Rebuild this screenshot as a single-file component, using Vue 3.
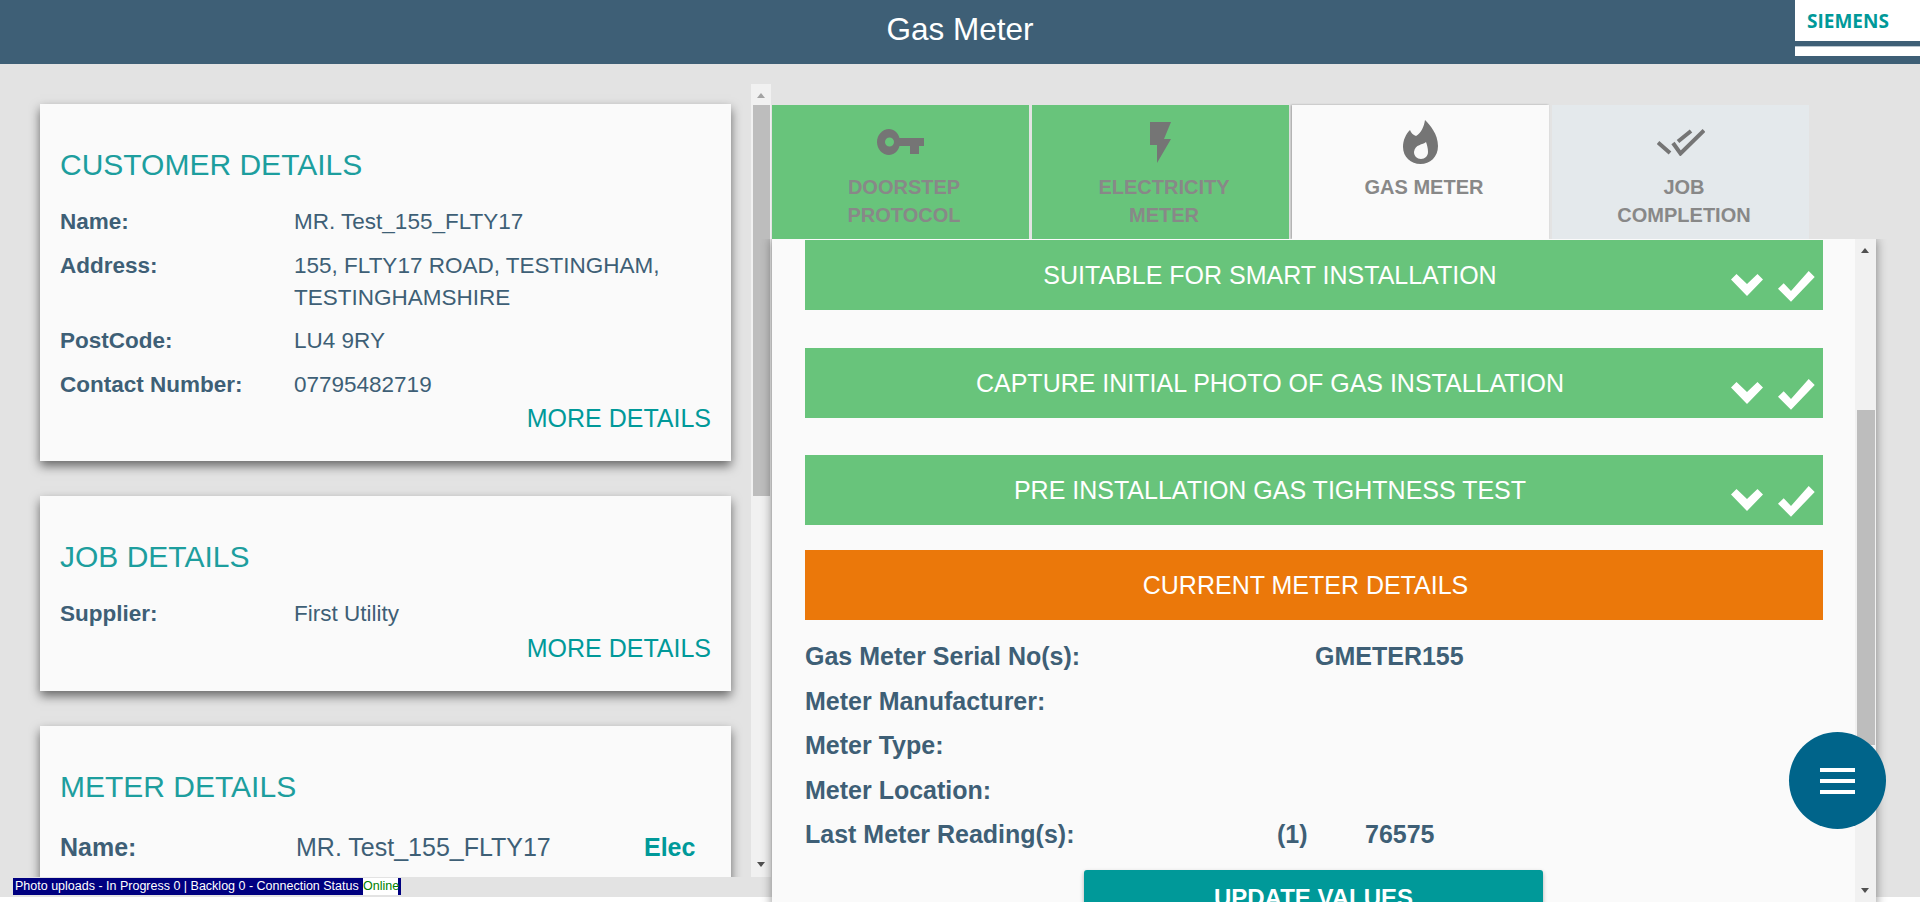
<script setup>
const tabs = [
  { id: 'key', lines: ['DOORSTEP', 'PROTOCOL'], state: 'done' },
  { id: 'bolt', lines: ['ELECTRICITY', 'METER'], state: 'done' },
  { id: 'flame', lines: ['GAS METER'], state: 'active' },
  { id: 'checks', lines: ['JOB', 'COMPLETION'], state: 'todo' }
]

const doneSteps = [
  'SUITABLE FOR SMART INSTALLATION',
  'CAPTURE INITIAL PHOTO OF GAS INSTALLATION',
  'PRE INSTALLATION GAS TIGHTNESS TEST'
]

const customer = [
  { label: 'Name:', value: 'MR. Test_155_FLTY17' },
  { label: 'Address:', value: '155, FLTY17 ROAD, TESTINGHAM, TESTINGHAMSHIRE' },
  { label: 'PostCode:', value: 'LU4 9RY' },
  { label: 'Contact Number:', value: '07795482719' }
]

const meterRows = [
  { label: 'Gas Meter Serial No(s):', value: 'GMETER155' },
  { label: 'Meter Manufacturer:', value: '' },
  { label: 'Meter Type:', value: '' },
  { label: 'Meter Location:', value: '' }
]
</script>

<template>
  <div class="page">
    <header class="topbar">
      <h1>Gas Meter</h1>
      <div class="logo">
        <div class="logo-top">SIEMENS</div>
        <div class="logo-line"></div>
        <div class="logo-bottom"></div>
      </div>
    </header>

    <main class="content">
      <section class="left">
        <div class="left-scroll">
          <div class="card">
            <h2>CUSTOMER DETAILS</h2>
            <div v-for="row in customer" :key="row.label" class="row">
              <b>{{ row.label }}</b>
              <span>{{ row.value }}</span>
            </div>
            <a class="more">MORE DETAILS</a>
          </div>
          <div class="card">
            <h2>JOB DETAILS</h2>
            <div class="row">
              <b>Supplier:</b>
              <span>First Utility</span>
            </div>
            <a class="more">MORE DETAILS</a>
          </div>
          <div class="card">
            <h2>METER DETAILS</h2>
            <div class="row meter-row">
              <b>Name:</b>
              <span>MR. Test_155_FLTY17</span>
              <em>Elec</em>
            </div>
          </div>
        </div>
        <div class="scrollbar left-bar">
          <i class="arrow up"></i>
          <div class="thumb"></div>
          <i class="arrow down"></i>
        </div>
      </section>

      <section class="right">
        <nav class="tabs">
          <div v-for="tab in tabs" :key="tab.id" class="tab" :class="tab.state">
            <div class="tab-icon">
              <svg v-if="tab.id === 'key'" width="47" height="26" viewBox="0 0 47 26">
                <path fill="#757575" fill-rule="evenodd" d="M12 0c5 0 9 3.500 10.500 9H47v8H42v8H33V17H22.500C21 22.500 17 26 12 26 5.500 26 0 20 0 13S5.500 0 12 0zm.5 8.500a4.500 4.500 0 1 0 0 9 4.500 4.500 0 0 0 0-9z" />
              </svg>
              <svg v-else-if="tab.id === 'bolt'" width="21" height="41" viewBox="0 0 21 41">
                <path fill="#757575" d="M0 0H21L14 17H21L7 41V23H0z" />
              </svg>
              <svg v-else-if="tab.id === 'flame'" width="35" height="44" viewBox="0 0 35 44">
                <path fill="#757575" fill-rule="evenodd" d="M22 0C27 5 35 14 35 26 35 37 27 44 17.500 44 8 44 0 37 0 27 0 20 3 14 7 10 8 13 10 15 13 16 18 13 21 7 22 0zM23 22C20 25 12 24 11 32 11 36 14 39 18 39 22 39 25 36 25 32 25 28 24 25 23 22z" />
              </svg>
              <svg v-else width="48" height="28" viewBox="0 0 48 28">
                <path fill="none" stroke="#757575" stroke-width="4" d="M1 14.500L13 25M16 15L23.500 25.500 47 2.500M21 13.500L34 3" />
              </svg>
            </div>
            <div class="tab-text">
              <div v-for="line in tab.lines" :key="line">{{ line }}</div>
            </div>
          </div>
        </nav>

        <div class="panel">
          <div class="panel-body">
            <div v-for="step in doneSteps" :key="step" class="step done">
              {{ step }}
              <div class="ticks">
                <svg class="tick-small" width="32" height="22" viewBox="0 0 32 22">
                  <path fill="#fff" d="M0 5.500L5.500 0 16 10 26.500 0 32 5.500 16 22z" />
                </svg>
                <svg width="37" height="31" viewBox="0 0 37 31">
                  <path fill="#fff" d="M0 17.700L5.700 12.300 13 20 30.700 0 36.700 6 13 30.700z" />
                </svg>
              </div>
            </div>
            <div class="step current">CURRENT METER DETAILS</div>

            <div class="details">
              <div v-for="row in meterRows" :key="row.label" class="detail">
                <span class="d-label">{{ row.label }}</span>
                <span class="d-value">{{ row.value }}</span>
              </div>
              <div class="detail">
                <span class="d-label">Last Meter Reading(s):</span>
                <span class="d-reg">(1)</span>
                <span class="d-read">76575</span>
              </div>
            </div>

            <button class="update">UPDATE VALUES</button>
          </div>
          <div class="scrollbar panel-bar">
            <i class="arrow up dark"></i>
            <div class="thumb"></div>
            <i class="arrow down dark"></i>
          </div>
        </div>
      </section>
    </main>

    <div class="status">Photo uploads - In Progress 0 | Backlog 0 - Connection Status <span>Online</span></div>

    <button class="fab" aria-label="Menu">
      <i></i><i></i><i></i>
    </button>
  </div>
</template>

<style scoped>
.page {
  position: relative;
  height: 902px;
  overflow: hidden;
  font-family: "Liberation Sans", Arial, sans-serif;
  color: #3e5f76;
}

.topbar {
  height: 64px;
  background: #3e5f76;
  display: flex;
  justify-content: center;
  align-items: center;
  position: relative;
}

.topbar h1 {
  margin: 0 0 5px;
  color: #fff;
  font-size: 31.500px;
  font-weight: 400;
}

.logo {
  position: absolute;
  top: 0;
  right: 0;
  width: 125px;
}

.logo-top {
  height: 41px;
  background: #fff;
  color: #009999;
  font-family: "Open Sans", sans-serif;
  font-weight: 700;
  font-size: 19px;
  line-height: 43px;
  padding-left: 12px;
  box-sizing: border-box;
}

.logo-line {
  height: 6px;
  border-bottom: 1px solid #b9c6cf;
  box-sizing: border-box;
}

.logo-bottom {
  height: 9px;
  background: #fff;
}

.content {
  height: 833px;
  background: #e3e3e3;
  display: flex;
}

.left {
  width: 772px;
  padding: 20px 0 0 40px;
  box-sizing: border-box;
  display: flex;
  height: 813px;
}

/* side padding only leaves room for the card shadows inside the clip */
.left-scroll {
  width: 691px;
  height: 773px;
  padding: 20px 12px 0;
  margin-left: -12px;
  margin-right: 8px;
  overflow: hidden;
}

.card {
  background: #fafafa;
  padding: 45px 20px 0;
  margin-bottom: 35px;
  box-shadow: 0 5px 10px rgba(0, 0, 0, 0.55);
  box-sizing: border-box;
}

.card:nth-child(1) {
  height: 357px;
}

.card:nth-child(2) {
  height: 195px;
}

.card:nth-child(3) {
  height: 300px;
}

.card h2 {
  margin: 0 0 25px;
  color: #1d9e9e;
  font-size: 30px;
  line-height: 32px;
  font-weight: 400;
}

.row {
  display: flex;
  font-size: 22.500px;
  line-height: 32px;
  margin-bottom: 11.500px;
}

.row b {
  width: 234px;
  flex: none;
}

.meter-row {
  font-size: 25px;
  margin-top: 28px;
}

.meter-row span {
  width: 348px;
  margin-left: 2px;
}

.meter-row em {
  color: #009999;
  font-style: normal;
  font-weight: 700;
}

.more {
  display: block;
  text-align: right;
  color: #009999;
  font-size: 25px;
  line-height: 28px;
  margin-top: -8px;
}

.scrollbar {
  flex: none;
  position: relative;
  width: 20px;
  box-sizing: border-box;
}

.left-bar {
  height: 793px;
  background: #f1f1f1;
  padding: 21px 1px 0 2px;
}

.left-bar .thumb {
  height: 391px;
  background: #bdbdbd;
}

.arrow {
  position: absolute;
  left: 5.500px;
  width: 0;
  height: 0;
  border-left: 4.500px solid transparent;
  border-right: 4.500px solid transparent;
}

.arrow.up {
  top: 9px;
  border-bottom: 5px solid #a3a3a3;
}

.arrow.down {
  bottom: 10px;
  border-top: 5px solid #505050;
}

.arrow.up.dark {
  border-bottom-color: #505050;
}

.right {
  width: 1104px;
  padding-top: 41px;
  box-sizing: border-box;
}

.tabs {
  display: flex;
  gap: 3px;
  height: 134px;
}

.tab {
  width: 257px;
  text-align: center;
  color: #888;
  font-weight: 700;
  font-size: 20px;
  line-height: 28px;
}

.tab.done {
  background: #68c47b;
}

.tab.active {
  background: #fafafa;
  box-shadow: -1px 0 2px rgba(0, 0, 0, 0.3);
}

.tab.todo {
  background: #e4e9ec;
}

.tab-icon {
  height: 52px;
  padding-top: 11px;
  display: flex;
  justify-content: center;
  align-items: center;
}

.tab-text {
  margin-top: 5px;
  padding-left: 7px;
}

.panel {
  position: relative;
  display: flex;
  height: 670px;
  background: #fafafa;
  box-shadow: 0 0 10px rgba(0, 0, 0, 0.45);
  clip-path: inset(0 -14px -14px -14px);
}

.panel-body {
  flex: 1;
  padding: 1px 32px 0 33px;
  min-width: 0;
}

.step {
  position: relative;
  height: 70px;
  box-sizing: border-box;
  color: #fff;
  font-size: 25px;
  line-height: 70px;
  text-align: center;
}

.step.done {
  background: #68c47b;
  margin-bottom: 38px;
  padding-right: 88px;
}

.step.done:nth-child(2) {
  margin-bottom: 37px;
}

.step.done:nth-child(3) {
  margin-bottom: 25px;
}

.step.current {
  background: #eb780a;
  padding-right: 17px;
}

.ticks {
  position: absolute;
  right: 8px;
  bottom: 8px;
  display: flex;
  align-items: flex-end;
  gap: 15px;
}

.ticks svg {
  display: block;
}

.ticks .tick-small {
  margin-bottom: 6px;
}

.details {
  padding-top: 14px;
  font-size: 25px;
  font-weight: 700;
}

.detail {
  display: flex;
  height: 44.500px;
  line-height: 44.500px;
}

.d-label {
  width: 510px;
  flex: none;
}

.d-reg {
  margin-left: -38px;
  width: 88px;
}

.update {
  display: block;
  width: 459px;
  height: 57px;
  margin: 13px 0 0 279px;
  border: 0;
  border-radius: 3px;
  background: #009999;
  color: #fff;
  font-family: inherit;
  font-weight: 700;
  font-size: 24px;
  box-shadow: 0 2px 4px rgba(0, 0, 0, 0.3);
}

.panel-bar {
  width: 21px;
  background: #f1f1f1;
  padding: 171px 1px 0 2px;
}

.panel-bar .thumb {
  height: 335px;
  background: #bdbdbd;
}

.panel-bar .arrow {
  left: 6px;
}

.panel-bar .arrow.down {
  bottom: 16px;
}

.status {
  position: absolute;
  left: 13px;
  top: 878px;
  display: flex;
  height: 17px;
  width: 388px;
  padding: 0 3px 0 2px;
  box-sizing: border-box;
  background: #000080;
  color: #fff;
  font-size: 12.500px;
  line-height: 17px;
  white-space: nowrap;
}

.status span {
  flex: none;
  margin-left: auto;
  width: 35px;
  background: #fff;
  color: #008000;
  text-align: center;
}

.fab {
  position: absolute;
  left: 1789px;
  top: 732px;
  width: 97px;
  height: 97px;
  border: 0;
  border-radius: 50%;
  background: #00648a;
  display: flex;
  flex-direction: column;
  align-items: center;
  justify-content: center;
  gap: 7px;
  padding: 0;
}

.fab i {
  display: block;
  width: 35px;
  height: 4px;
  background: #fff;
}
</style>
